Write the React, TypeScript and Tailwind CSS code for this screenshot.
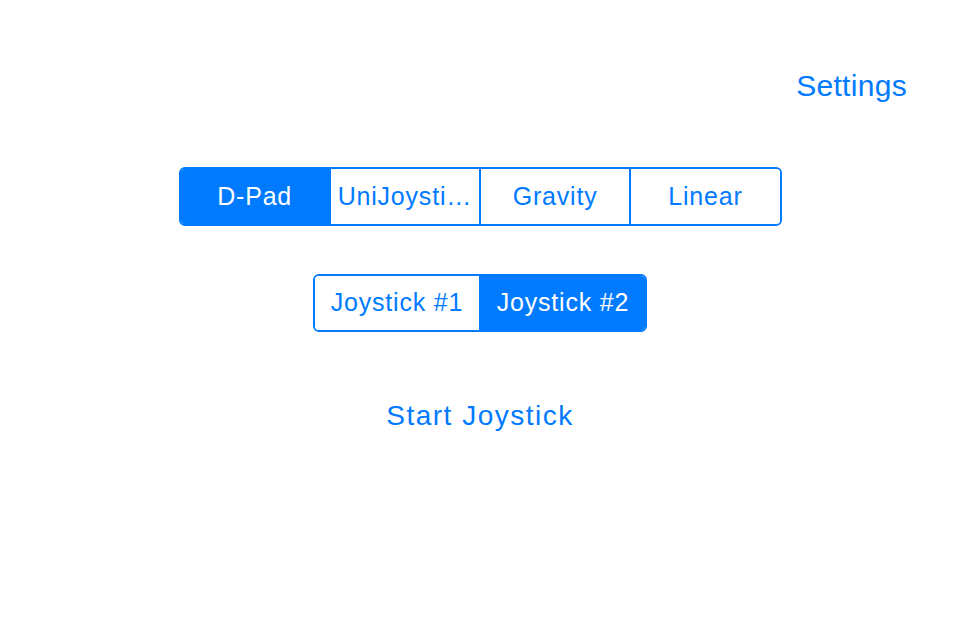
import React, { useState } from "react";

const modes = ["D-Pad", "UniJoysti…", "Gravity", "Linear"];
const sticks = ["Joystick #1", "Joystick #2"];

const font = { fontFamily: '"Liberation Sans", Arial, sans-serif' };

const Segmented = ({
  items,
  active,
  onChange,
  className,
}: {
  items: string[];
  active: number;
  onChange: (i: number) => void;
  className: string;
}) => (
  <div className={`flex overflow-hidden rounded-[6px] border-2 border-[#007aff] ${className}`}>
    {items.map((label, i) => (
      <button
        key={label}
        onClick={() => onChange(i)}
        className={`flex flex-1 items-center justify-center truncate px-[4px] text-[25px] tracking-[0.8px] ${
          i > 0 ? "border-l-2 border-[#007aff]" : ""
        } ${i === active ? "bg-[#007aff] text-white" : "bg-white text-[#007aff]"}`}
      >
        {label}
      </button>
    ))}
  </div>
);

const App = () => {
  const [mode, setMode] = useState(0);
  const [stick, setStick] = useState(1);

  return (
    <div className="flex h-[640px] w-full flex-col items-center bg-white" style={font}>
      <div className="flex w-full justify-end pr-[53px] pt-[68px]">
        <button className="text-[30px] leading-[36px] tracking-[0.3px] text-[#007aff]">Settings</button>
      </div>

      <Segmented
        items={modes}
        active={mode}
        onChange={setMode}
        className="mt-[63px] h-[59px] w-[603px]"
      />

      <Segmented
        items={sticks}
        active={stick}
        onChange={setStick}
        className="mt-[48px] h-[58px] w-[334px]"
      />

      <button className="mt-[67px] text-[28px] leading-[34px] tracking-[1.5px] text-[#007aff]">
        Start Joystick
      </button>
    </div>
  );
};

export default App;
